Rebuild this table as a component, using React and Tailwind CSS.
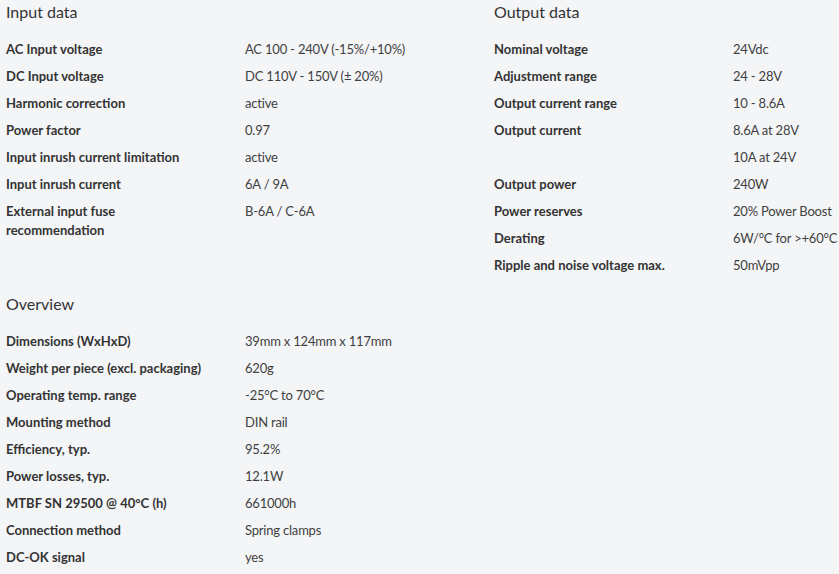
import React from 'react'

// -----------------------------------

const inputData = [
    ["AC Input voltage", "AC 100 - 240V (-15%/+10%)"],
    ["DC Input voltage", "DC 110V - 150V (± 20%)"],
    ["Harmonic correction", "active"],
    ["Power factor", "0.97"],
    ["Input inrush current limitation", "active"],
    ["Input inrush current", "6A / 9A"],
    ["External input fuse recommendation", "B-6A / C-6A"],
];

const outputData = [
    ["Nominal voltage", "24Vdc"],
    ["Adjustment range", "24 - 28V"],
    ["Output current range", "10 - 8.6A"],
    ["Output current", "8.6A at 28V"],
    ["", "10A at 24V"],
    ["Output power", "240W"],
    ["Power reserves", "20% Power Boost"],
    ["Derating", "6W/°C for >+60°C"],
    ["Ripple and noise voltage max.", "50mVpp"],
];

const overview = [
    ["Dimensions (WxHxD)", "39mm x 124mm x 117mm"],
    ["Weight per piece (excl. packaging)", "620g"],
    ["Operating temp. range", "-25°C to 70°C"],
    ["Mounting method", "DIN rail"],
    ["Efficiency, typ.", "95.2%"],
    ["Power losses, typ.", "12.1W"],
    ["MTBF SN 29500 @ 40°C (h)", "661000h"],
    ["Connection method", "Spring clamps"],
    ["DC-OK signal", "yes"],
];

const SpecTable = ({ title, rows }) => {
    return (
        <div>
            <h3 className="h-6 leading-6 text-[16px] font-normal text-[#333] mb-3">{title}</h3>
            <div>
                {rows.map(([label, value], i) => (
                    <div key={i} className="grid grid-cols-[239px_1fr] py-1 text-[13px] leading-[19px]">
                        <div className="font-bold text-[#333] pr-[36px]">{label}</div>
                        <div className="text-[#3f3f3f] whitespace-nowrap tracking-[-0.2px]">{value}</div>
                    </div>
                ))}
            </div>
        </div>
    );
};

export default function App() {
    return (
        <div
            className="w-[839px] h-[574px] overflow-hidden bg-[#f4f5f7] px-[6px]"
            style={{ fontFamily: "Lato, 'Open Sans', sans-serif" }}
        >
            {/* Input / Output */}
            <div className="grid grid-cols-[488px_1fr]">
                <SpecTable title="Input data" rows={inputData} />
                <SpecTable title="Output data" rows={outputData} />
            </div>

            {/* Overview */}
            <div className="mt-[13px]">
                <SpecTable title="Overview" rows={overview} />
            </div>
        </div>
    );
}
